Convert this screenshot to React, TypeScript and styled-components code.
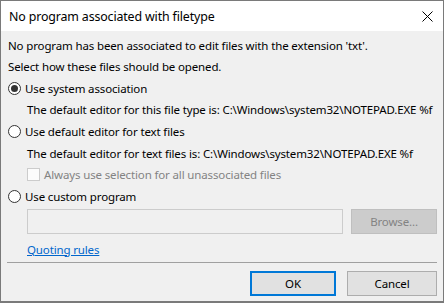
import styled, { createGlobalStyle } from 'styled-components';

const GlobalStyle = createGlobalStyle`
  html, body {
    margin: 0;
    padding: 0;
    background: #f0f0f0;
  }
  * {
    box-sizing: border-box;
  }
`;

export default function App() {
  return (
    <>
      <GlobalStyle />
      <Window>
        <TitleBar>
          <Title>No program associated with filetype</Title>
          <CloseButton>
            <svg width="11" height="11" viewBox="0 0 11 11">
              <path d="M0.5 0.5 L10.5 10.5 M10.5 0.5 L0.5 10.5" stroke="#000" strokeWidth="1" fill="none" />
            </svg>
          </CloseButton>
        </TitleBar>
        <Body>
          <Line>No program has been associated to edit files with the extension 'txt'.</Line>
          <Line>Select how these files should be opened.</Line>
          <Line>
            <Radio checked />
            <span>Use system association</span>
          </Line>
          <Line indent>The default editor for this file type is: C:\Windows\system32\NOTEPAD.EXE %f</Line>
          <Line>
            <Radio />
            <span>Use default editor for text files</span>
          </Line>
          <Line indent>The default editor for text files is: C:\Windows\system32\NOTEPAD.EXE %f</Line>
          <Line indent disabled>
            <Checkbox />
            <span>Always use selection for all unassociated files</span>
          </Line>
          <Line>
            <Radio />
            <span>Use custom program</span>
          </Line>
          <ProgramRow>
            <PathInput />
            <BrowseButton>Browse...</BrowseButton>
          </ProgramRow>
          <LinkRow>
            <Link>Quoting rules</Link>
          </LinkRow>
          <Separator />
          <ButtonRow>
            <DialogButton primary>OK</DialogButton>
            <DialogButton>Cancel</DialogButton>
          </ButtonRow>
        </Body>
      </Window>
    </>
  );
}

const Window = styled.div`
  width: 444px;
  height: 303px;
  border: 1px solid #7a7a7a;
  border-bottom-width: 2px;
  background: #f0f0f0;
  display: flex;
  flex-direction: column;
  font-family: "Noto Sans", "Open Sans", sans-serif;
  font-size: 11.5px;
  letter-spacing: -0.14px;
  color: #000;
`;

const TitleBar = styled.div`
  height: 30px;
  background: #fff;
  display: flex;
  align-items: center;
  justify-content: space-between;
  padding-left: 8px;
  padding-right: 10px;
`;

const Title = styled.div`
  font-size: 12.4px;
`;

const CloseButton = styled.div`
  width: 11px;
  height: 11px;
  display: flex;
`;

const Body = styled.div`
  flex: 1;
  display: flex;
  flex-direction: column;
  padding: 3px 6px 0 6px;
`;

const Line = styled.div<{ indent?: boolean; disabled?: boolean }>`
  height: 21.6px;
  display: flex;
  align-items: center;
  gap: 4px;
  white-space: nowrap;
  padding-left: ${(p) => (p.indent ? '20px' : '1px')};
  color: ${(p) => (p.disabled ? '#838383' : '#000')};
  &:first-child {
    height: 22px;
  }
`;

const Radio = styled.span<{ checked?: boolean }>`
  width: 13px;
  height: 13px;
  border-radius: 50%;
  border: 1px solid #333;
  background: #fff;
  display: flex;
  align-items: center;
  justify-content: center;
  flex-shrink: 0;
  &::after {
    content: '';
    display: ${(p) => (p.checked ? 'block' : 'none')};
    width: 7px;
    height: 7px;
    border-radius: 50%;
    background: #333;
  }
`;

const Checkbox = styled.span`
  width: 13px;
  height: 13px;
  border: 1px solid #cccccc;
  background: #fcfcfc;
  flex-shrink: 0;
`;

const ProgramRow = styled.div`
  display: flex;
  gap: 8px;
  margin-top: 2px;
  padding-left: 20px;
`;

const PathInput = styled.div`
  width: 316px;
  height: 25px;
  border: 1px solid #cccccc;
  background: #f0f0f0;
`;

const BrowseButton = styled.div`
  width: 86px;
  height: 25px;
  border: 1px solid #bfbfbf;
  background: #cccccc;
  color: #838383;
  display: flex;
  align-items: center;
  justify-content: center;
`;

const LinkRow = styled.div`
  height: 18px;
  margin-top: 6px;
  padding-left: 20px;
  display: flex;
  align-items: center;
`;

const Link = styled.span`
  color: #0066cc;
  text-decoration: underline;
`;

const Separator = styled.div`
  height: 1px;
  background: #a0a0a0;
  margin-top: 4px;
`;

const ButtonRow = styled.div`
  display: flex;
  justify-content: flex-end;
  gap: 11px;
  margin-top: 8px;
`;

const DialogButton = styled.div<{ primary?: boolean }>`
  width: ${(p) => (p.primary ? '86px' : '90px')};
  height: 25px;
  background: #e1e1e1;
  border: ${(p) => (p.primary ? '2px solid #0078d7' : '1px solid #adadad')};
  display: flex;
  align-items: center;
  justify-content: center;
`;
